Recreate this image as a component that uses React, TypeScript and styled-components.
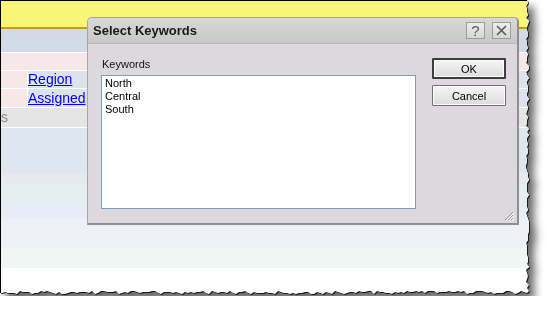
import styled, { createGlobalStyle } from 'styled-components';

const GlobalStyle = createGlobalStyle`
  html, body { margin: 0; padding: 0; background: #fff; }
  body { font-family: "Liberation Sans", Arial, sans-serif; }
`;

// ragged right/bottom edge of the cut-out screenshot
const tornEdge = (() => {
  let s = 7;
  const rnd = () => {
    s = (s * 9301 + 49297) % 233280;
    return s / 233280;
  };
  const W = 527;
  const H = 292;
  const pts: string[] = ['0 0', `${W + 1}px 0`];
  for (let y = 0; y <= H; y += 3) pts.push(`${W - 1 + Math.round(rnd() * 3)}px ${y}px`);
  for (let x = W; x >= 0; x -= 3) pts.push(`${x}px ${H - 1 + Math.round(rnd() * 3)}px`);
  pts.push(`0 ${H + 1}px`);
  return `polygon(${pts.join(',')})`;
})();

const Frame = styled.div`
  width: 530px;
  height: 296px;
  filter: drop-shadow(1px 1px 0 rgba(0, 0, 0, 0.75)) drop-shadow(6px 7px 4px rgba(0, 0, 0, 0.6));
`;

const Paper = styled.div`
  position: relative;
  width: 100%;
  height: 100%;
  box-sizing: border-box;
  border-left: 1px solid #000;
  border-top: 1px solid #000;
  background: #fff;
  display: flex;
  flex-direction: column;
  overflow: hidden;
`;

const Header = styled.div`
  height: 26px;
  background: #f8f677;
  border-bottom: 2px solid #c8962c;
`;

const Band = styled.div`
  height: 23px;
  background: linear-gradient(#d4d8e7 0, #d4d8e7 6px, #cfdce6 7px, #d2dae6 12px, #cfdde6 16px, #d3d9e6 23px);
  border-bottom: 1px solid #fff;
`;

const Row = styled.div<{ $h: number; $bg: string }>`
  height: ${(p) => p.$h}px;
  background: ${(p) => p.$bg};
  border-bottom: 1px solid #fff;
  display: flex;
`;

const KeyCell = styled.div`
  width: 26px;
  background: #f6e7e8;
  border-right: 1px solid #fff;
`;

const LinkCell = styled.div`
  flex: 1;
  background: #dce3ed;
  display: flex;
  align-items: center;
`;

const Link = styled.a`
  font-size: 14px;
  color: #0000ff;
  text-decoration: underline;
  line-height: 17px;
`;

const GrayText = styled.span`
  font-size: 14px;
  color: #8a8a8a;
  line-height: 19px;
`;

const Stripe = styled.div<{ $h: number; $bg: string }>`
  height: ${(p) => p.$h}px;
  background: ${(p) => p.$bg};
  flex-shrink: 0;
`;

const Dialog = styled.div`
  position: absolute;
  left: 86px;
  top: 16px;
  width: 432px;
  height: 208px;
  box-sizing: border-box;
  border: 1px solid #a6a6a6;
  border-right: 2px solid #8f8f8f;
  border-bottom: 2px solid #8f8f8f;
  border-radius: 5px 5px 0 0;
  overflow: hidden;
  display: flex;
  flex-direction: column;
  background: #ddd8de;
`;

const TitleBar = styled.div`
  height: 26px;
  flex-shrink: 0;
  box-sizing: border-box;
  background: linear-gradient(#d8d8d8, #c8c8c8);
  border-bottom: 1px solid #bab7bb;
  display: flex;
  align-items: center;
  padding: 0 6px 0 5px;
`;

const Title = styled.div`
  flex: 1;
  font-size: 13px;
  font-weight: bold;
  color: #1a1a1a;
`;

const TitleButtons = styled.div`
  display: flex;
  gap: 7px;
`;

const TitleButton = styled.div`
  width: 17px;
  height: 15px;
  border: 1px solid #9c9c9c;
  background: linear-gradient(#eeeeee, #d6d6d6);
  display: flex;
  align-items: center;
  justify-content: center;
  font-size: 15px;
  color: #5c5c5c;
  line-height: 15px;
`;

const Body = styled.div`
  position: relative;
  flex: 1;
  display: flex;
  gap: 16px;
  padding: 14px 12px 14px 13px;
`;

const Column = styled.div`
  display: flex;
  flex-direction: column;
`;

const Label = styled.div`
  font-size: 11px;
  line-height: 13px;
  color: #111;
  padding-left: 1px;
  margin-bottom: 4px;
`;

const ListBox = styled.div`
  width: 310px;
  height: 131px;
  background: #fff;
  border: 1px solid #7f9db9;
  padding: 1px 0 0 3px;
`;

const Item = styled.div`
  font-size: 11px;
  line-height: 13px;
  color: #000;
`;

const Buttons = styled.div`
  display: flex;
  flex-direction: column;
  gap: 6px;
`;

const Button = styled.button<{ $default?: boolean }>`
  width: 74px;
  height: 21px;
  box-sizing: border-box;
  padding: 0;
  font-family: "Liberation Sans", Arial, sans-serif;
  font-size: 11px;
  color: #000;
  background: linear-gradient(#f6f6f6, #dcdcdc);
  border: ${(p) => (p.$default ? '2px solid #3e3e3e' : '1px solid #707070')};
  box-shadow: inset 0 0 0 1px #fbfbfb;
  border-radius: 1px;
`;

const Grip = styled.svg`
  position: absolute;
  right: 3px;
  bottom: 2px;
`;

export default function App() {
  return (
    <>
      <GlobalStyle />
      <Frame>
        <Paper style={{ clipPath: tornEdge }}>
          <Header />
          <Band />
          <Row $h={17} $bg="#f6e7e8" />
          <Row $h={17} $bg="#dce3ed">
            <KeyCell />
            <LinkCell>
              <Link>Region</Link>
            </LinkCell>
          </Row>
          <Row $h={18} $bg="#dce3ed">
            <KeyCell />
            <LinkCell>
              <Link>Assigned</Link>
            </LinkCell>
          </Row>
          <Row $h={19} $bg="#e5e5e5">
            <GrayText>s</GrayText>
          </Row>
          <Stripe $h={45} $bg="#dee6ef" />
          <Stripe $h={11} $bg="#e8e8f1" />
          <Stripe $h={17} $bg="#e6efef" />
          <Stripe $h={18} $bg="#e6edf6" />
          <Stripe $h={29} $bg="#efeff8" />
          <Stripe $h={20} $bg="#eff7f5" />

          <Dialog>
            <TitleBar>
              <Title>Select Keywords</Title>
              <TitleButtons>
                <TitleButton>?</TitleButton>
                <TitleButton>
                  <svg width="11" height="11" viewBox="0 0 11 11">
                    <path d="M1 1 L10 10 M10 1 L1 10" stroke="#5c5c5c" strokeWidth="1.7" />
                  </svg>
                </TitleButton>
              </TitleButtons>
            </TitleBar>
            <Body>
              <Column>
                <Label>Keywords</Label>
                <ListBox>
                  <Item>North</Item>
                  <Item>Central</Item>
                  <Item>South</Item>
                </ListBox>
              </Column>
              <Buttons>
                <Button $default>OK</Button>
                <Button>Cancel</Button>
              </Buttons>
              <Grip width="11" height="11" viewBox="0 0 11 11">
                <path d="M10 2 L2 10 M10 5 L5 10 M10 8 L8 10" stroke="#9a9a9a" strokeWidth="1" />
                <path d="M11 3 L3 11 M11 6 L6 11 M11 9 L9 11" stroke="#ffffff" strokeWidth="1" />
              </Grip>
            </Body>
          </Dialog>
        </Paper>
      </Frame>
    </>
  );
}
